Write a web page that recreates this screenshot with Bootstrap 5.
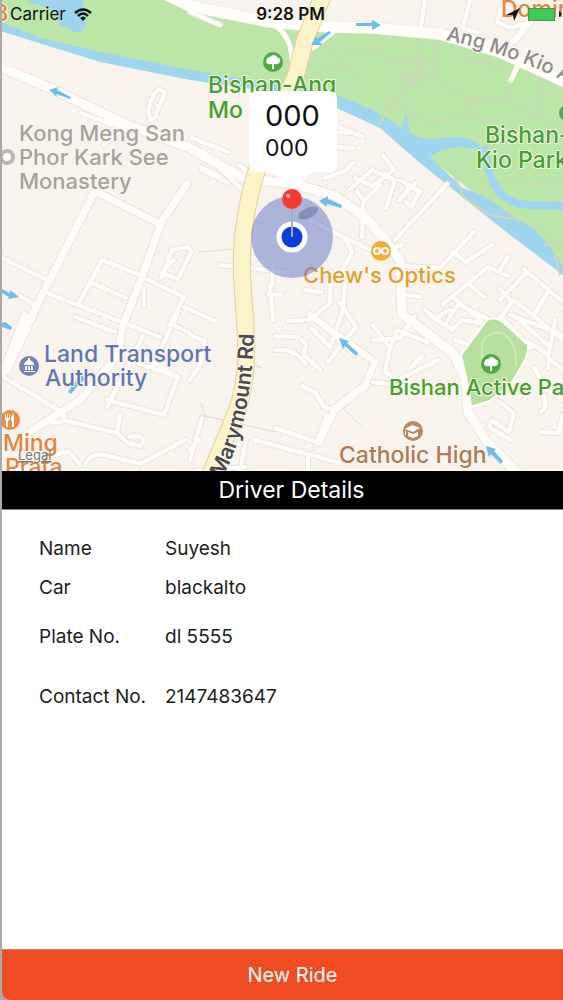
<!DOCTYPE html>
<html lang="en">
<head>
<meta charset="utf-8">
<meta name="viewport" content="width=device-width, initial-scale=1">
<title>Driver Details</title>
<link href="https://cdn.jsdelivr.net/npm/bootstrap@5.3.0/dist/css/bootstrap.min.css" rel="stylesheet">
<style>
body{font-family:Inter,"Liberation Sans",sans-serif;background:#aaa;color:#1c1c1e}
.app{margin-left:2px;border-bottom-left-radius:8px;overflow:hidden}
.map{background:#f8f3ec}
.map svg.canvas{width:100%;height:auto}
.status{font-size:17px;line-height:20px;padding:4px 0 0 8px;color:#111}
.clock{font-weight:600;padding-left:8px}
.battery{width:27px;height:13px;background:#3ccb57;border:1px solid #4a9a45}
.title-bar{font-size:23px;line-height:38px;border-bottom:1px solid #888;padding-right:2px;padding-left:20px}
.details{font-size:19px;line-height:26px;padding:26px 37px;grid-template-columns:126px 1fr}
.details dt,.details dd{font-weight:400;margin:0 0 13px}
.details .roomy{margin-bottom:23px}
.details .wide{margin-bottom:34px}
.ride{background:#f04c23;font-size:20px;line-height:50px;border-top:1px solid #c98a70;padding:0 0 0 20px}
.poi{font-size:23px;font-weight:500;stroke:#fbf7ef;stroke-width:2px;paint-order:stroke;stroke-linejoin:round}
.poi .quiet{font-size:22px}
.road-name{font-size:20px;font-weight:500;stroke:#fbf7ef;stroke-width:2px;paint-order:stroke}
.road-name.strong{font-size:21px;font-weight:600}
</style>
</head>
<body>
<div class="app d-flex flex-column min-vh-100 bg-white">
<section class="map position-relative" aria-label="Map">
<svg class="canvas d-block" viewBox="2 0 561 471" fill="none" stroke-linecap="round" stroke-linejoin="round">
<defs>
<g id="minor">
<path d="M2 258L47 280M20 296L36 306M47 293L160 337M78 305L102 260L140 275M90 282L126 298M142 277L184 297L170 325M184 307L215 321M144 288V306M81 113L130 131M120 131L104 145"/>
<path d="M151 120Q146 113 151 101L155 93Q159 87 164 92Q165 97 160 103L155 117L150 120"/>
<path d="M162 277L172 250L188 247Q194 252 188 258L178 279L161 273M166 268L174 260"/>
<path d="M75 317L115 332M178 312L153 366M155 363L178 377L164 415M137 363L178 377M143 336L107 407M174 325L190 333M107 400L164 415M65 408L63 420L117 433L120 415M117 433L128 443L140 446Q147 440 139 436L129 437M60 422L53 423M56 455L68 451L80 465M85 465Q90 452 105 455L140 464L185 440"/>
<path d="M5 378L58 410M245 467L195 471M255 440L340 463M246 440L240 471M308 455V471M275 428L317 442L327 415M302 386L316 393L323 406L333 410M275 336L298 337L306 344L304 355L320 370M275 350Q295 348 306 364M190 460L202 418M190 450L198 440M190 335L205 341L200 365L190 380"/>
<path d="M192 138L228 152M330 123L363 137M325 146L353 148M317 130L350 133M190 12L220 25"/>
<path d="M201 167L219 176M202 170L228 183M215 160L240 180M214 163L245 192M245 190L250 175L240 165M325 178L345 171L353 163M350 189L370 172M355 178L372 186L394 170L383 155M357 191L362 198M363 202L380 185"/>
<path d="M310 220L345 238L352 252L335 285M345 238L375 252L402 245M395 240L447 184M362 237L363 205M372 170L395 180L386 208M408 187L420 191L411 207L406 202M400 198L415 183M408 191L399 200M400 180L415 188"/>
<path d="M402 266L440 268L474 232M452 252L466 262L492 245M405 295L421 297M443 304L488 267L508 276M500 270L508 257M453 297L482 322M470 285L484 297M425 310L445 325L458 304L490 320L500 328M524 269L563 302M527 272L500 300M500 289L512 302L503 314M514 300L563 340M549 290L534 315"/>
<path d="M270 286L273 320M268 294L282 295M288 321L310 320L330 303L331 272M273 265L272 285M305 290L322 292M220 265L285 272M253 258L264 261M316 318L355 355M311 328L330 347L343 310L345 280M340 303L356 327L328 362"/>
<path d="M373 325L390 348L385 372M373 340L400 338L415 316M390 348L397 330L427 342M385 372L398 380L438 360M373 382L395 385M409 369L422 356M455 340L483 350M430 315L452 330L462 320L480 323M510 315L563 335M435 318L450 310M500 316L531 348M528 342L549 355L548 368M513 315L548 345M555 320L548 358L563 370M534 368L548 390L563 400M541 392Q550 405 541 412M497 400L514 413L509 432L492 420Q487 428 494 430L511 440M541 432L558 433L563 415M510 389L520 397"/>
<path d="M425 0L421 26M470 0L463 28L475 32M500 10L497 22L510 28L523 24L520 34L512 42M533 20L515 42M525 25L540 8"/>
</g>
<g id="mid">
<path d="M93 195L42 295L28 325L7 370M95 191L160 224L187 184M160 226L140 282L123 325L118 355L80 400L28 433M2 375L25 315M333 410L366 385"/>
</g>
<g id="major">
<path d="M-5 65L50 88L125 124L190 148L243 178L295 184L335 196L366 218L385 240L400 260L402 314L454 354L466 380L468 412L490 446L520 475"/>
</g>
<g id="lane"><path d="M310 315L375 362L365 385L335 410L319 443"/></g>
<path id="ang-road" d="M165 -6L190 6L270 22L330 27L373 28L440 34L500 52L570 84"/>
<path id="ang-text" d="M446 40Q505 52 580 88"/>
<path id="mary-text" d="M222 478Q252 425 254 330"/>
</defs>
<!-- park and water -->
<path fill="#bce5a8" d="M0 0H175L270 27L373 33L440 38L500 56L563 84V270L470 190L400 135L330 105L210 76L100 60L0 30Z"/>
<path fill="#9fd5ee" d="M28 0H82Q88 15 84 30Q75 35 67 28Q55 25 58 16Q50 5 34 4ZM0 22L40 38L100 52L190 70L260 82L335 94L373 110L402 128Q420 142 440 138Q470 134 482 147Q475 150 460 147Q435 150 430 157L463 188Q490 196 510 215Q545 230 563 268V275L505 231L420 163L380 128L335 107L260 90L190 80L100 62L0 31Z"/>
<path stroke="#9fd5ee" stroke-width="8" d="M485 150Q490 185 502 195T530 205T570 207"/>
<path fill="#9fd5ee" d="M402 128L406 113L410 132Z"/>
<g stroke="#cad9b8" stroke-width="2">
<path d="M418 38V75L400 92L379 125M434 42L432 70L418 80L405 76L396 61L373 52M396 61H430M432 70Q440 90 472 98L503 98L535 116L563 125M503 98L512 78M541 75L540 105L535 118M389 95L412 116Q425 124 447 119L468 116L490 122M472 98L468 116M460 54Q485 66 505 66M325 44L348 65L335 75L322 62M345 55L375 50M348 65L360 85M455 178Q462 190 463 197L490 215L520 220Q540 225 552 245L560 275M508 178Q535 190 563 178M545 245L563 242"/>
<path d="M403 77L423 90M423 75L404 88M413 73V92"/>
</g>
<!-- roads: edge first, then surface -->
<g stroke="#ebe5de"><use href="#minor" stroke-width="6"/><use href="#mid" stroke-width="9"/><use href="#lane" stroke-width="8"/><use href="#major" stroke-width="11"/><use href="#ang-road" stroke-width="12"/></g>
<g stroke="#fffefa"><use href="#minor" stroke-width="4"/><use href="#mid" stroke-width="7"/><use href="#lane" stroke-width="6"/><use href="#major" stroke-width="9"/><use href="#ang-road" stroke-width="11"/><path stroke-width="5" d="M275 25Q292 38 292 60M333 32L313 48M518 65L511 80"/></g>
<path fill="#b7e09e" stroke="#fffefa" stroke-width="2" d="M461 355L487 320Q495 316 503 322L528 345Q529 352 525 360L511 384L490 401L471 407L467 382Z"/>
<path stroke="#cfe8b9" stroke-width="2" d="M482 370V342Q492 329 504 334Q517 343 516 365"/>
<path stroke="#e0dccb" stroke-width="1" d="M199 252L232 249M201 403L205 416L245 425L275 432M343 408L362 427M254 365L262 368"/>
<g stroke-linecap="butt">
<path stroke="#eccd98" stroke-width="18" d="M323 -5L305 40L296 75L262 155Q240 215 242 275L245 320Q250 380 235 415L210 475"/>
<path stroke="#fbf4c8" stroke-width="16" d="M323 -5L305 40L296 75L262 155Q240 215 242 275L245 320Q250 380 235 415L210 475"/>
</g>
<!-- one-way arrows -->
<g fill="#6cbcec">
<path d="M49 90L58 87L57 90L71 97L70 99L56 94L57 97Z"/>
<path d="M319 201L328 196L328 199L342 205L341 208L327 204L327 207ZM381 25L372 20V23H356V26H372V30ZM311 45L316 36L317 39L329 31L331 33L320 42L322 45ZM19 297L10 290L10 293L2 289V293L9 297L8 299ZM339 338L349 341L347 343L358 353L356 356L345 346L343 349ZM486 446L496 449L494 451L503 461L501 464L491 454L489 457ZM12 327L5 322L2 323V327L11 330ZM68 392L72 386L82 375L85 379L76 388L71 394Z"/>
</g>
<!-- place labels -->
<g class="poi">
<g class="quiet" fill="#a6a29c"><text x="19" y="141">Kong Meng San</text><text x="19" y="165">Phor Kark See</text><text x="19" y="189">Monastery</text></g>
<g fill="#43a02a"><text x="208" y="93">Bishan-Ang</text><text x="208" y="118">Mo</text><text x="485" y="143">Bishan-</text><text x="476" y="168">Kio Park</text></g>
<text class="quiet" x="389" y="395" fill="#43a02a">Bishan Active Park</text>
<text class="quiet" x="303" y="283" fill="#dfa02e">Chew's Optics</text>
<g fill="#6275b2"><text x="44" y="362">Land Transport</text><text x="45" y="386">Authority</text></g>
<g fill="#e28442"><text x="3" y="451">Ming</text><text x="5" y="475">Prata</text><text x="501" y="17">Domino's</text><text x="-6" y="21">8</text></g>
<text x="339" y="463" fill="#ad7a56">Catholic High</text>
</g>
<text class="road-name" fill="#8b8b8e"><textPath href="#ang-text">Ang Mo Kio Ave</textPath></text>
<text class="road-name strong" fill="#4b4b4b"><textPath href="#mary-text">Marymount Rd</textPath></text>
<a href="#legal"><text x="18" y="460" font-size="13" fill="#777" text-decoration="underline">Legal</text></a>
<!-- place markers -->
<circle cx="7" cy="157" r="6" fill="#fff" stroke="#bbb6ae" stroke-width="4"/>
<g fill="#51a94a"><circle cx="273" cy="62" r="10"/><circle cx="491" cy="364" r="10"/><circle cx="567" cy="113" r="8"/></g>
<g id="tree" fill="#fff"><path d="M272 69L272 64Q266 65 266 61Q267 57 270 57Q274 53 277 57Q281 58 280 62Q278 65 274 64V69Z"/></g>
<use href="#tree" x="218" y="302"/>
<circle cx="381" cy="251" r="10" fill="#f2ad37"/>
<g stroke="#fff" stroke-width="2"><circle cx="377" cy="251" r="3"/><circle cx="385" cy="251" r="3"/></g>
<circle cx="29" cy="366" r="10" fill="#7384bd"/>
<path fill="#fff" d="M28 358H30V360Q34 362 34 365H24Q24 362 28 360ZM25 366H27V370H25ZM28 366H30V370H28ZM31 366H33V370H31ZM24 371H35V372H24Z"/>
<circle cx="10" cy="420" r="10" fill="#ee8b45"/>
<path fill="#fff" d="M5 414H6V418H7V414H8V418H9V414H10V419L8 421V427H6V421L5 419ZM12 427V421H11Q11 415 14 413V427Z"/>
<circle cx="413" cy="431" r="10" fill="#b58966"/>
<path fill="#fff" d="M405 429L412 425L420 428L413 432ZM408 432L413 434L418 432V436L413 438L408 436ZM405 431H406V435H405Z"/>
<!-- current position, pin and callout -->
<circle cx="292" cy="237" r="41" fill="#6275c8" fill-opacity=".5"/>
<ellipse cx="308" cy="213" rx="11" ry="5" fill="#4b5687" fill-opacity=".4" transform="rotate(-25 308 213)"/>
<circle cx="292" cy="237" r="13" fill="#0b3fd7" stroke="#fff" stroke-width="5"/>
<path stroke="#a9adb8" stroke-width="2" d="M292 207V236"/>
<circle cx="292" cy="199" r="10" fill="#f73932"/><circle cx="288" cy="196" r="2" fill="#ffc4bd"/>
<path fill="#fff" d="M257 91H329Q337 91 337 99V164Q337 172 329 172H318Q308 173 303 181Q300 187 292 187Q284 187 281 181Q276 173 266 172H257Q249 172 249 164V99Q249 91 257 91Z"/>
<text x="265" y="126" font-size="29" fill="#111">000</text>
<text x="265" y="156" font-size="23" fill="#111">000</text>
</svg>
<header class="status position-absolute top-0 start-0 w-100 row g-0 align-items-center">
<div class="col d-flex align-items-center gap-2"><span>Carrier</span>
<svg width="18" height="13" viewBox="0 0 18 13" fill="none" stroke="#111" stroke-width="2.500"><path d="M1 5Q9-2 17 5M4 8Q9 3 14 8"/><path d="M9 13L6 10Q9 7 12 10Z" fill="#111" stroke="none"/></svg></div>
<div class="col-auto clock">9:28 PM</div>
<div class="col d-flex justify-content-end align-items-center gap-2">
<svg width="14" height="13" viewBox="0 0 14 13"><path fill="#111" d="M0 7L14 0L8 13L7 7Z"/></svg>
<div class="d-flex align-items-center gap-1"><div class="battery"></div><svg width="4" height="6" viewBox="0 0 4 6"><path d="M0 0Q5 3 0 6Z" fill="#111"/></svg></div>
</div>
</header>
</section>
<h1 class="title-bar bg-black text-white text-center fw-normal m-0">Driver Details</h1>
<dl class="details d-grid m-0 flex-grow-1 align-content-start">
<dt>Name</dt><dd>Suyesh</dd>
<dt class="roomy">Car</dt><dd class="roomy">blackalto</dd>
<dt class="wide">Plate No.</dt><dd class="wide">dl 5555</dd>
<dt>Contact No.</dt><dd>2147483647</dd>
</dl>
<button type="button" class="ride btn rounded-0 border-start-0 border-end-0 border-bottom-0 text-white w-100">New Ride</button>
</div>
<script src="https://cdn.jsdelivr.net/npm/bootstrap@5.3.0/dist/js/bootstrap.bundle.min.js"></script>
</body>
</html>
